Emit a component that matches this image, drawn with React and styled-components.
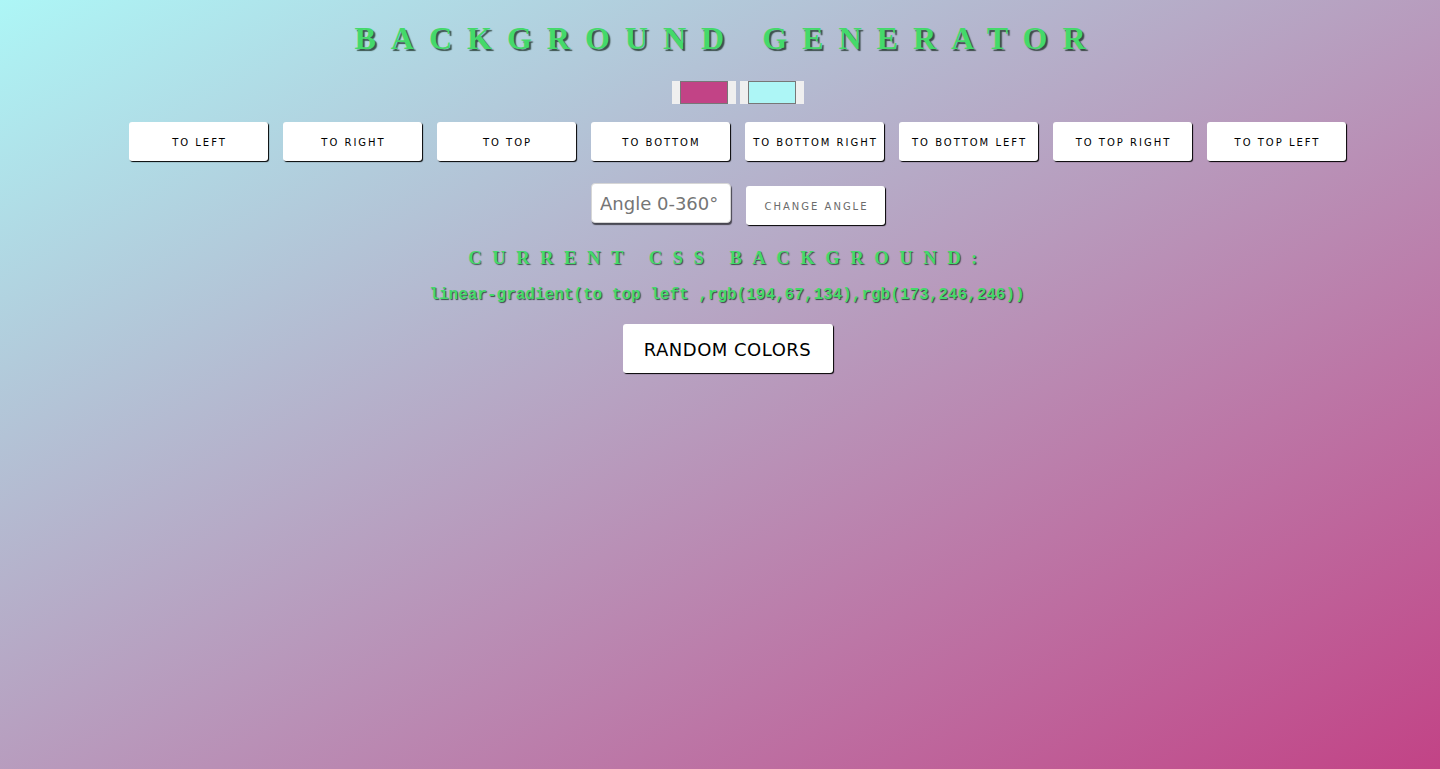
import React from "react";
import styled, { createGlobalStyle } from "styled-components";

const Global = createGlobalStyle`
  html, body { margin: 0; padding: 0; }
  body {
    min-height: 100vh;
    background: linear-gradient(to top left, rgb(194,67,134), rgb(173,246,246));
    font-family: "DejaVu Sans", Verdana, sans-serif;
  }
`;

const Page = styled.main`
  display: flex;
  flex-direction: column;
  align-items: center;
  padding: 20px 0 0 16px;
  min-height: 100vh;
  box-sizing: border-box;
`;

const Shift = styled.div`
  display: flex;
  justify-content: center;
  padding-left: ${(p) => Math.max(p.$shift || 0, 0)}px;
  padding-right: ${(p) => Math.max(-(p.$shift || 0), 0)}px;
  margin-top: ${(p) => p.$top || 0}px;
`;

const Title = styled.h1`
  margin: 0;
  font-family: "Liberation Serif", "Times New Roman", serif;
  font-weight: bold;
  font-size: 32px;
  line-height: 37px;
  letter-spacing: 15px;
  color: #44d96a;
  text-shadow: 2px 2px 1px rgba(20, 40, 30, 0.75);
  white-space: nowrap;
`;

const Swatches = styled.div`
  display: flex;
  gap: 4px;
`;

const Swatch = styled.div`
  width: 64px;
  height: 23px;
  box-sizing: border-box;
  padding: 0 8px;
  background: #efefef;
  display: flex;
`;

const SwatchFill = styled.div`
  flex: 1;
  border: 1px solid #777;
  background: ${(p) => p.$color};
`;

const ButtonRow = styled.div`
  display: flex;
  gap: 15px;
`;

const DirButton = styled.button`
  width: 139px;
  height: 39px;
  border: none;
  border-radius: 3px;
  background: #fff;
  box-shadow: 1px 1px 1px #000;
  font-family: "DejaVu Sans", Verdana, sans-serif;
  font-size: 10px;
  letter-spacing: 2px;
  color: ${(p) => (p.$muted ? "#6b6b6b" : "#000")};
  text-transform: uppercase;
  padding: 2px 0 0 2px;
  cursor: pointer;
`;

const AngleRow = styled.div`
  display: flex;
  align-items: flex-start;
  gap: 15px;
`;

const AngleInput = styled.input`
  width: 140px;
  height: 40px;
  box-sizing: border-box;
  border: 1px solid #d6d6d6;
  border-radius: 4px;
  background: #fff;
  box-shadow: 1px 2px 1px rgba(0, 0, 0, 0.6);
  padding: 1px 0 0 8px;
  font-family: "DejaVu Sans", Verdana, sans-serif;
  font-size: 18px;
  color: #333;
  outline: none;
  &::placeholder { color: #757575; }
`;

const AngleButton = styled(DirButton)`
  margin-top: 3px;
  height: 39px;
`;

const SubTitle = styled.h3`
  margin: 0;
  font-family: "Liberation Serif", "Times New Roman", serif;
  font-weight: bold;
  font-size: 18.72px;
  line-height: 21.5px;
  letter-spacing: 10.45px;
  color: #44d96a;
  text-shadow: 1px 1px 1px rgba(20, 40, 30, 0.75);
  white-space: nowrap;
`;

const Code = styled.p`
  margin: 0;
  font-family: "Liberation Mono", "Courier New", monospace;
  font-weight: bold;
  font-size: 16px;
  line-height: 18px;
  color: #44d96a;
  text-shadow: 1px 1px 1px rgba(20, 40, 30, 0.75);
  white-space: nowrap;
`;

const RandomButton = styled.button`
  width: 210px;
  height: 49px;
  border: none;
  border-radius: 3px;
  background: #fff;
  box-shadow: 1px 1px 1px #000;
  font-family: "DejaVu Sans", Verdana, sans-serif;
  font-size: 18px;
  letter-spacing: 0.5px;
  color: #000;
  padding: 2px 0 0;
  cursor: pointer;
`;

const directions = [
  "to left",
  "to right",
  "to top",
  "to bottom",
  "to bottom right",
  "to bottom left",
  "to top right",
  "to top left",
];

export default function App() {
  return (
    <>
      <Global />
      <Page>
        <Shift $shift={-1}>
          <Title>BACKGROUND GENERATOR</Title>
        </Shift>
        <Shift $shift={20} $top={24}>
          <Swatches>
            <Swatch><SwatchFill $color="rgb(194,67,134)" /></Swatch>
            <Swatch><SwatchFill $color="rgb(173,246,246)" /></Swatch>
          </Swatches>
        </Shift>
        <Shift $shift={19} $top={18}>
          <ButtonRow>
            {directions.map((d) => (
              <DirButton key={d}>{d}</DirButton>
            ))}
          </ButtonRow>
        </Shift>
        <Shift $shift={20} $top={22}>
          <AngleRow>
            <AngleInput placeholder="Angle 0-360°" />
            <AngleButton $muted>Change angle</AngleButton>
          </AngleRow>
        </Shift>
        <Shift $shift={0} $top={22}>
          <SubTitle>CURRENT CSS BACKGROUND:</SubTitle>
        </Shift>
        <Shift $shift={-2} $top={17}>
          <Code>linear-gradient(to top left ,rgb(194,67,134),rgb(173,246,246))</Code>
        </Shift>
        <Shift $shift={-1} $top={20}>
          <RandomButton>RANDOM COLORS</RandomButton>
        </Shift>
      </Page>
    </>
  );
}
